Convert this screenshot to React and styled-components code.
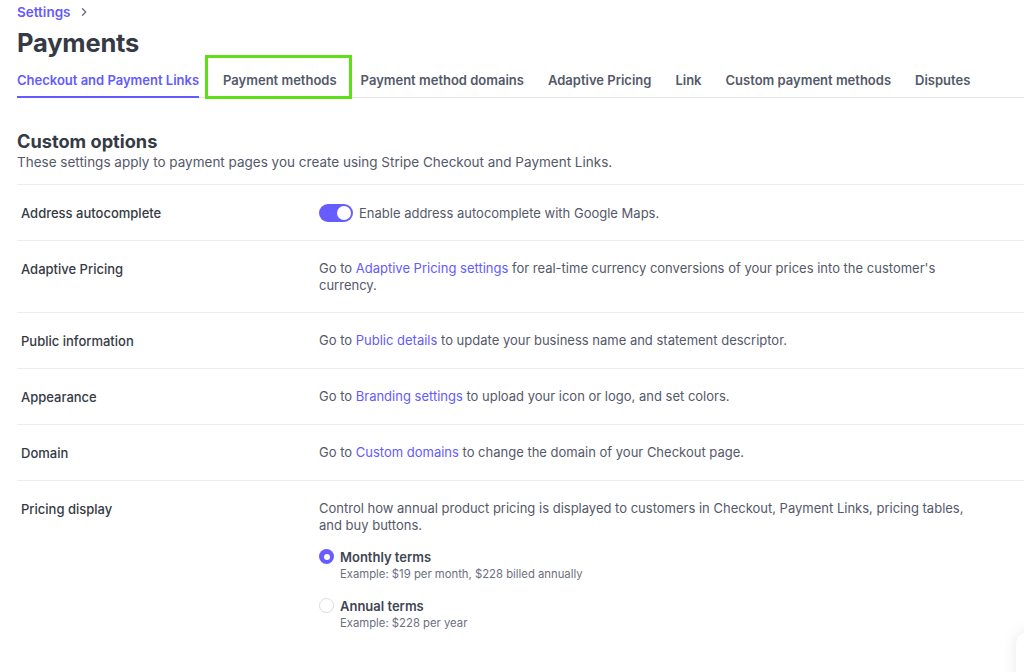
import React from "react";
import styled, { createGlobalStyle } from "styled-components";

const Global = createGlobalStyle`
  html, body { margin: 0; padding: 0; background: #fff; }
  body { font-family: Inter, "Noto Sans", sans-serif; color: #353a44; -webkit-font-smoothing: antialiased; overflow: hidden; }
  * { box-sizing: border-box; }
`;

const Page = styled.div`
  position: relative;
  width: 1024px;
  height: 672px;
  overflow: hidden;
  padding: 0 0 0 17px;
`;

const Crumbs = styled.div`
  display: flex;
  align-items: center;
  gap: 8px;
  height: 24px;
  font-size: 13.5px;
  font-weight: 600;
  color: #635bff;
`;

const Chevron = styled.span`
  display: flex;
  align-items: center;
`;

const Title = styled.h1`
  margin: 3px 0 0;
  font-size: 25.5px;
  line-height: 32px;
  font-weight: 700;
  color: #353a44;
  letter-spacing: -0.2px;
`;

const Tabs = styled.div`
  display: flex;
  gap: 24px;
  margin-top: 3px;
  border-bottom: 1px solid #e3e5ea;
`;

const Tab = styled.div`
  position: relative;
  font-size: 13px;
  font-weight: 600;
  line-height: 20px;
  padding: 8px 0 6px;
  white-space: nowrap;
  color: ${(p) => (p.$active ? "#635bff" : "#545969")};
  border-bottom: 2px solid ${(p) => (p.$active ? "#635bff" : "transparent")};
  margin-bottom: -1px;
`;

const Highlight = styled.div`
  position: absolute;
  left: -18px;
  right: -15px;
  top: -7px;
  bottom: -3px;
  border: 3px solid #5de018;
  pointer-events: none;
`;

const Section = styled.section`
  margin-top: 32px;
`;

const SectionTitle = styled.h2`
  margin: 0;
  font-size: 18.2px;
  line-height: 22px;
  font-weight: 700;
  color: #353a44;
`;

const SectionSub = styled.p`
  margin: 0;
  font-size: 13.5px;
  line-height: 20px;
  color: #545969;
`;

const List = styled.div`
  margin-top: 12px;
  border-top: 1px solid #ebeef1;
`;

const Row = styled.div`
  display: grid;
  grid-template-columns: 298px 1fr;
  padding: 19px 0 18px 4px;
  border-bottom: ${(p) => (p.$last ? "none" : "1px solid #ebeef1")};
  font-size: 13px;
`;

const Label = styled.div`
  font-weight: 500;
  color: #353a44;
  line-height: 18px;
`;

const Body = styled.div`
  color: #545969;
  max-width: 650px;
  line-height: 17px;
`;

const Link = styled.a`
  color: #635bff;
  text-decoration: none;
`;

const ToggleLine = styled.div`
  display: flex;
  align-items: center;
  gap: 6px;
  height: 18px;
  color: #545969;
`;

const Toggle = styled.span`
  position: relative;
  width: 34px;
  height: 18px;
  border-radius: 9px;
  background: #675dff;
  flex: none;
  &::after {
    content: "";
    position: absolute;
    right: 2px;
    top: 2px;
    width: 14px;
    height: 14px;
    border-radius: 50%;
    background: #fff;
  }
`;

const Radios = styled.div`
  display: flex;
  flex-direction: column;
  gap: 15px;
  margin-top: 14px;
`;

const Radio = styled.div`
  display: grid;
  grid-template-columns: 15px 1fr;
  column-gap: 6px;
`;

const Dot = styled.span`
  width: 15px;
  height: 15px;
  margin-top: 1px;
  border-radius: 50%;
  background: ${(p) => (p.$on ? "#675dff" : "#fff")};
  border: ${(p) => (p.$on ? "none" : "1px solid #d8dbe1")};
  display: flex;
  align-items: center;
  justify-content: center;
  &::after {
    content: "";
    display: ${(p) => (p.$on ? "block" : "none")};
    width: 6px;
    height: 6px;
    border-radius: 50%;
    background: #fff;
  }
`;

const RadioTitle = styled.div`
  font-size: 13px;
  font-weight: 600;
  color: #414552;
  line-height: 18px;
`;

const RadioHint = styled.div`
  grid-column: 2;
  font-size: 11.3px;
  line-height: 16px;
  color: #6c7080;
`;

const Floating = styled.div`
  position: absolute;
  right: -40px;
  bottom: -40px;
  width: 48px;
  height: 80px;
  border-radius: 12px;
  background: #fff;
  box-shadow: 0 0 14px rgba(60, 66, 87, 0.12);
`;

const tabs = [
  "Checkout and Payment Links",
  "Payment methods",
  "Payment method domains",
  "Adaptive Pricing",
  "Link",
  "Custom payment methods",
  "Disputes",
];

export default function App() {
  return (
    <>
      <Global />
      <Page>
        <Crumbs>
          Settings
          <Chevron>
            <svg width="10" height="10" viewBox="0 0 10 10" fill="none">
              <path d="M3.5 1.8 6.7 5 3.5 8.2" stroke="#6c7080" strokeWidth="1.4" strokeLinecap="round" strokeLinejoin="round" />
            </svg>
          </Chevron>
        </Crumbs>
        <Title>Payments</Title>
        <Tabs>
          {tabs.map((t, i) => (
            <Tab key={t} $active={i === 0}>
              {t}
              {i === 1 && <Highlight />}
            </Tab>
          ))}
        </Tabs>
        <Section>
          <SectionTitle>Custom options</SectionTitle>
          <SectionSub>
            These settings apply to payment pages you create using Stripe Checkout and Payment Links.
          </SectionSub>
          <List>
            <Row>
              <Label>Address autocomplete</Label>
              <ToggleLine>
                <Toggle />
                Enable address autocomplete with Google Maps.
              </ToggleLine>
            </Row>
            <Row>
              <Label>Adaptive Pricing</Label>
              <Body>
                Go to <Link>Adaptive Pricing settings</Link> for real-time currency conversions of your prices into the customer's currency.
              </Body>
            </Row>
            <Row>
              <Label>Public information</Label>
              <Body>
                Go to <Link>Public details</Link> to update your business name and statement descriptor.
              </Body>
            </Row>
            <Row>
              <Label>Appearance</Label>
              <Body>
                Go to <Link>Branding settings</Link> to upload your icon or logo, and set colors.
              </Body>
            </Row>
            <Row>
              <Label>Domain</Label>
              <Body>
                Go to <Link>Custom domains</Link> to change the domain of your Checkout page.
              </Body>
            </Row>
            <Row $last>
              <Label>Pricing display</Label>
              <Body>
                Control how annual product pricing is displayed to customers in Checkout, Payment Links, pricing tables, and buy buttons.
                <Radios>
                  <Radio>
                    <Dot $on />
                    <RadioTitle>Monthly terms</RadioTitle>
                    <RadioHint>Example: $19 per month, $228 billed annually</RadioHint>
                  </Radio>
                  <Radio>
                    <Dot />
                    <RadioTitle>Annual terms</RadioTitle>
                    <RadioHint>Example: $228 per year</RadioHint>
                  </Radio>
                </Radios>
              </Body>
            </Row>
          </List>
        </Section>
        <Floating />
      </Page>
    </>
  );
}
